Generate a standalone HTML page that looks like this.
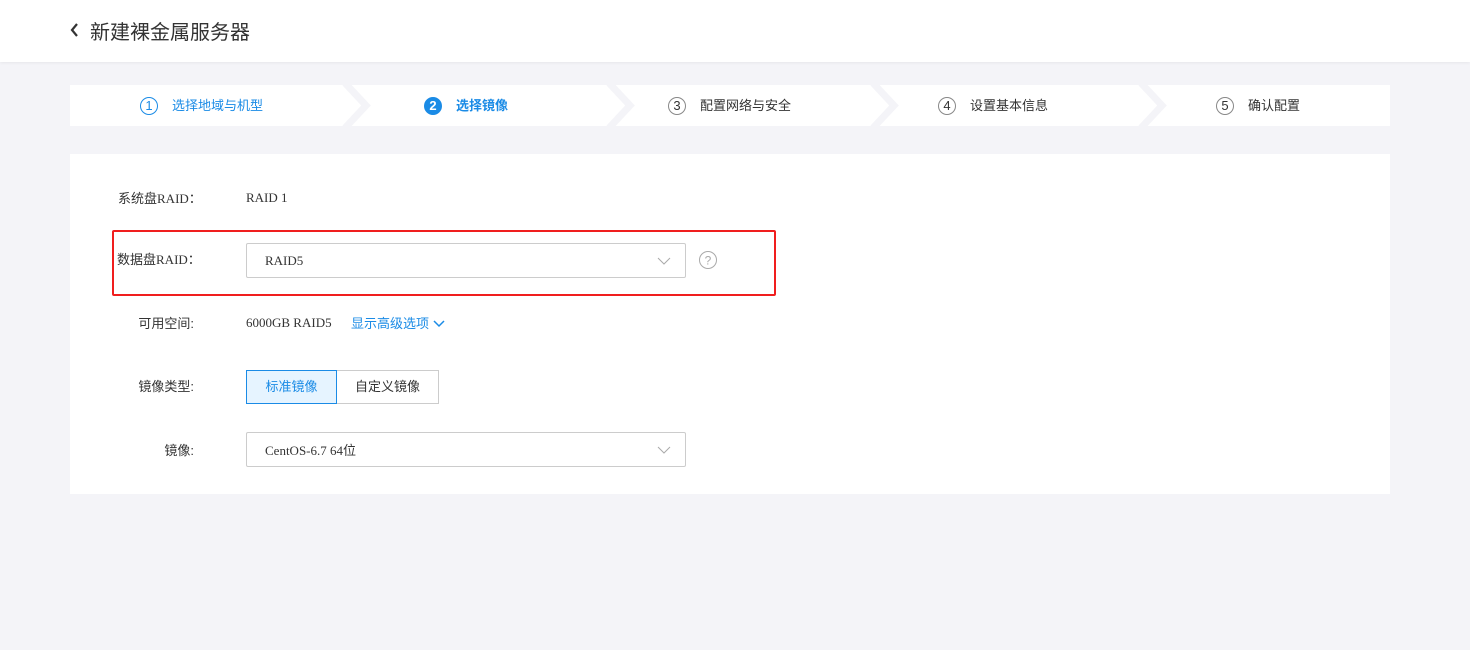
<!DOCTYPE html>
<html><head><meta charset="utf-8"><style>
*{margin:0;padding:0;box-sizing:border-box}
body{width:1470px;height:650px;background:#f4f4f8;font-family:"Liberation Sans","Noto Sans CJK SC",sans-serif;position:relative;overflow:hidden;color:#333}
.hdr{position:absolute;left:0;top:0;width:1470px;height:62px;background:#fff;box-shadow:0 1px 3px rgba(0,0,0,.06)}
.hdr .t{position:absolute;left:90px;top:16px;font-size:20px;color:#333}
.steps{position:absolute;left:70px;top:85px;width:1320px;height:41px;background:#fff}
.st{position:absolute;top:0;height:41px;line-height:41px;font-size:13px;color:#333;white-space:nowrap}
.c{display:inline-block;width:18px;height:18px;border:1px solid #888;border-radius:50%;text-align:center;line-height:16px;font-size:13px;margin-right:14px;vertical-align:middle;position:relative;top:-1px}
.card{position:absolute;left:70px;top:154px;width:1320px;height:340px;background:#fff}
.lbl{position:absolute;font-size:13px;color:#333;text-align:right;width:90px}
.serif{font-family:"Liberation Serif","Noto Sans CJK SC",serif;font-size:13px;position:absolute;color:#333}
.sel{position:absolute;left:176px;width:440px;height:35px;border:1px solid #ccc;border-radius:2px;background:#fff}
.sel span{position:absolute;left:18px;top:9px;font-family:"Liberation Serif","Noto Sans CJK SC",serif;font-size:13px}
.sel svg{position:absolute;right:14px;top:13px}
.fw{font-family:"Noto Sans CJK SC",sans-serif}
</style></head><body>
<div class="hdr"><svg style="position:absolute;left:69px;top:22px" width="12" height="16"><path d="M8 2 L3 8 L8 14" stroke="#333" stroke-width="2.2" fill="none"/></svg><div class="t">新建裸金属服务器</div></div>
<div class="steps">
<svg style="position:absolute;left:0;top:0" width="1320" height="41">
<g stroke="#f4f4f8" stroke-width="7" fill="none">
<polyline points="275,-2 296,20.5 275,43"/>
<polyline points="539,-2 560,20.5 539,43"/>
<polyline points="803,-2 824,20.5 803,43"/>
<polyline points="1071,-2 1092,20.5 1071,43"/>
</g></svg>
<div class="st" style="left:70px;color:#1a8be6"><span class="c" style="border-color:#1a8be6;color:#1a8be6">1</span>选择地域与机型</div>
<div class="st" style="left:354px;color:#1a8be6;font-weight:bold"><span class="c" style="border-color:#1a8be6;background:#1a8be6;color:#fff">2</span>选择镜像</div>
<div class="st" style="left:598px"><span class="c">3</span>配置网络与安全</div>
<div class="st" style="left:868px"><span class="c">4</span>设置基本信息</div>
<div class="st" style="left:1146px"><span class="c">5</span>确认配置</div>
</div>
<div class="card">
<div class="lbl" style="left:48px;top:34px;width:auto">系统盘<span style="font-family:'Liberation Serif',serif">RAID</span><span class="fw">：</span></div>
<div class="serif" style="left:176px;top:36px">RAID 1</div>
<div class="lbl" style="left:47px;top:95px;width:auto">数据盘<span style="font-family:'Liberation Serif',serif">RAID</span><span class="fw">：</span></div>
<div class="sel" style="top:89px"><span>RAID5</span><svg width="14" height="8"><path d="M1 1 L7 7 L13 1" stroke="#aaa" fill="none"/></svg></div>
<svg style="position:absolute;left:628px;top:96px" width="20" height="20"><circle cx="10" cy="10" r="8.5" stroke="#aaa" fill="none"/><text x="10" y="14.5" font-size="12" text-anchor="middle" fill="#aaa" font-family="Liberation Sans">?</text></svg>
<div style="position:absolute;left:42px;top:76px;width:664px;height:66px;border:2px solid #f01e1e;border-radius:2px"></div>
<div class="lbl" style="left:34px;top:159px">可用空间:</div>
<div class="serif" style="left:176px;top:161px">6000GB RAID5</div>
<div style="position:absolute;left:281px;top:159px;font-size:13px;color:#1a8be6">显示高级选项 <svg width="12" height="8"><path d="M1 1 L6 6 L11 1" stroke="#1a8be6" stroke-width="1.5" fill="none"/></svg></div>
<div class="lbl" style="left:34px;top:222px">镜像类型:</div>
<div style="position:absolute;left:176px;top:216px;width:91px;height:34px;border:1px solid #1a8be6;background:#e6f4ff;color:#1a8be6;font-size:13px;text-align:center;line-height:31px;z-index:1">标准镜像</div>
<div style="position:absolute;left:266px;top:216px;width:103px;height:34px;border:1px solid #ccc;font-size:13px;text-align:center;line-height:31px">自定义镜像</div>
<div class="lbl" style="left:34px;top:286px">镜像:</div>
<div class="sel" style="top:278px"><span style="top:7px">CentOS-6.7 64位</span><svg width="14" height="8"><path d="M1 1 L7 7 L13 1" stroke="#aaa" fill="none"/></svg></div>
</div>
</body></html>
